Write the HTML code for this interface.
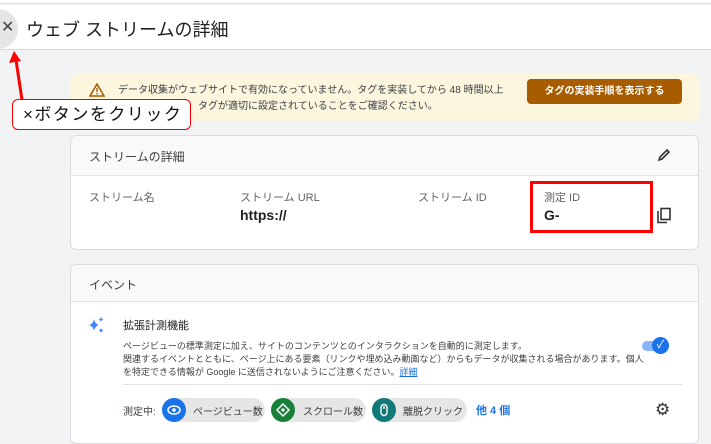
<!DOCTYPE html>
<html><head><meta charset="utf-8"><style>
*{margin:0;padding:0;box-sizing:border-box}
body{width:711px;height:435px;overflow:hidden;background:#f1f3f4;font-family:"Liberation Sans","Noto Sans CJK JP",sans-serif;color:#202124;position:relative}
.a{position:absolute;white-space:nowrap}
</style></head><body>
<div class="a" style="left:0;top:0;width:711px;height:4px;background:#fff;border-bottom:1px solid #e0e0e0"></div>
<div class="a" style="left:0;top:5px;width:711px;height:45px;background:#fff;border-bottom:1px solid #dadce0"></div>
<div class="a" style="left:-22px;top:9px;width:40px;height:40px;border-radius:50%;background:#e4e5e7"></div>
<div class="a" style="left:1px;top:17px;font-size:16px;color:#444">✕</div>
<div class="a" style="left:26px;top:16px;font-size:18px;color:#202124">ウェブ ストリームの詳細</div>

<div class="a" style="left:70px;top:74px;width:629px;height:48px;background:#fdf6df;border-radius:6px"></div>
<svg class="a" style="left:89px;top:83px" width="16" height="14" viewBox="0 0 16 14"><path d="M8 1L15 13H1Z" fill="none" stroke="#a85c00" stroke-width="1.6"/><rect x="7.3" y="5" width="1.4" height="4" fill="#a85c00"/><rect x="7.3" y="10" width="1.4" height="1.4" fill="#a85c00"/></svg>
<div class="a" style="left:118px;top:83px;font-size:10px;line-height:16px;color:#3c4043">データ収集がウェブサイトで有効になっていません。タグを実装してから 48 時間以上<br>経過した場合は、タグが適切に設定されていることをご確認ください。</div>
<div class="a" style="left:527px;top:79px;width:155px;height:25px;background:#a85c00;border-radius:4px;color:#fff;font-size:10px;font-weight:bold;text-align:center;line-height:25px">タグの実装手順を表示する</div>

<div class="a" style="left:70px;top:135px;width:629px;height:115px;background:#fff;border:1px solid #dadce0;border-radius:6px;overflow:hidden">
<div style="height:40px;background:#f8f9fa;border-bottom:1px solid #e3e3e3;font-size:12px;padding:12px 0 0 18px;color:#3c4043">ストリームの詳細</div>
</div>
<svg class="a" style="left:657px;top:148px" width="14" height="14" viewBox="0 0 14 14"><path d="M2 12L3 9L10 2L12 4L5 11Z" fill="none" stroke="#333" stroke-width="1.6"/></svg>
<div class="a" style="left:89px;top:189px;font-size:11px;color:#5f6368">ストリーム名</div>
<div class="a" style="left:240px;top:189px;font-size:11px;color:#5f6368">ストリーム URL</div>
<div class="a" style="left:240px;top:207px;font-size:14px;font-weight:bold;color:#202124">https://</div>
<div class="a" style="left:418px;top:189px;font-size:11px;color:#5f6368">ストリーム ID</div>
<div class="a" style="left:544px;top:189px;font-size:11px;color:#5f6368">測定 ID</div>
<div class="a" style="left:544px;top:207px;font-size:14px;font-weight:bold;color:#202124">G-</div>
<div class="a" style="left:530px;top:181px;width:123px;height:52px;border:3px solid #f00"></div>
<svg class="a" style="left:656px;top:207px" width="16" height="17" viewBox="0 0 16 17"><rect x="5" y="1.5" width="9" height="11" fill="none" stroke="#333" stroke-width="1.6"/><path d="M2 4V15.5H11" fill="none" stroke="#333" stroke-width="1.6"/></svg>

<div class="a" style="left:70px;top:264px;width:629px;height:180px;background:#fff;border:1px solid #dadce0;border-radius:6px;overflow:hidden">
<div style="height:37px;background:#f8f9fa;border-bottom:1px solid #e3e3e3;font-size:12px;padding:11px 0 0 18px;color:#3c4043">イベント</div>
</div>
<svg class="a" style="left:88px;top:316px" width="18" height="18" viewBox="0 0 18 18" fill="#4285f4"><path d="M6 3Q7 8 11 9Q7 10 6 15Q5 10 1 9Q5 8 6 3Z"/><path d="M13 1Q13.5 3 15.5 3.5Q13.5 4 13 6Q12.5 4 10.5 3.5Q12.5 3 13 1Z"/><path d="M13 12Q13.5 14 15.5 14.5Q13.5 15 13 17Q12.5 15 10.5 14.5Q12.5 14 13 12Z"/></svg>
<div class="a" style="left:123px;top:317px;font-size:11px;color:#202124">拡張計測機能</div>
<div class="a" style="left:123px;top:340px;font-size:9px;line-height:13px;color:#3c4043">ページビューの標準測定に加え、サイトのコンテンツとのインタラクションを自動的に測定します。<br>関連するイベントとともに、ページ上にある要素（リンクや埋め込み動画など）からもデータが収集される場合があります。個人<br>を特定できる情報が Google に送信されないようにご注意ください。<span style="color:#1a73e8;text-decoration:underline">詳細</span></div>
<div class="a" style="left:642px;top:341px;width:22px;height:10px;border-radius:5px;background:#8ab4f8"></div>
<div class="a" style="left:652px;top:337px;width:17px;height:17px;border-radius:50%;background:#1a73e8;color:#fff;font-size:11px;text-align:center;line-height:17px">✓</div>
<div class="a" style="left:123px;top:384px;width:559px;height:1px;background:#e0e0e0"></div>
<div class="a" style="left:123px;top:403px;font-size:10px;color:#3c4043">測定中:</div>
<div class="a" style="left:162px;top:398px;width:103px;height:24px;border-radius:12px;background:#e6e6e6"></div>
<div class="a" style="left:162px;top:398px;width:24px;height:24px;border-radius:50%;background:#1a73e8"></div>
<svg class="a" style="left:166px;top:402px" width="16" height="16" viewBox="0 0 16 16"><ellipse cx="8" cy="8" rx="6" ry="4" fill="none" stroke="#fff" stroke-width="1.5"/><circle cx="8" cy="8" r="1.8" fill="#fff"/></svg>
<div class="a" style="left:193px;top:403px;font-size:10px;color:#3c4043">ページビュー数</div>
<div class="a" style="left:271px;top:398px;width:95px;height:24px;border-radius:12px;background:#e6e6e6"></div>
<div class="a" style="left:271px;top:398px;width:24px;height:24px;border-radius:50%;background:#188038"></div>
<svg class="a" style="left:275px;top:402px" width="16" height="16" viewBox="0 0 16 16"><path d="M8 2L14 8L8 14L2 8Z" fill="none" stroke="#fff" stroke-width="1.5"/><circle cx="8" cy="8" r="1.6" fill="#fff"/></svg>
<div class="a" style="left:303px;top:403px;font-size:10px;color:#3c4043">スクロール数</div>
<div class="a" style="left:372px;top:398px;width:95px;height:24px;border-radius:12px;background:#e6e6e6"></div>
<div class="a" style="left:372px;top:398px;width:24px;height:24px;border-radius:50%;background:#12797a"></div>
<svg class="a" style="left:376px;top:402px" width="16" height="16" viewBox="0 0 16 16"><rect x="5" y="2.5" width="6" height="11" rx="3" fill="none" stroke="#fff" stroke-width="1.4"/><path d="M8 4V7" stroke="#fff" stroke-width="1.4"/></svg>
<div class="a" style="left:403px;top:403px;font-size:10px;color:#3c4043">離脱クリック</div>
<div class="a" style="left:476px;top:402px;font-size:11px;color:#1a73e8;font-weight:bold">他 4 個</div>
<div class="a" style="left:655px;top:400px;font-size:17px;color:#333">⚙</div>

<svg class="a" style="left:0;top:48px" width="40" height="54"><path d="M22 52L16 12" stroke="#f00" stroke-width="3" fill="none"/><path d="M9 15L14 3L21 13Z" fill="#f00"/></svg>
<div class="a" style="left:12px;top:99px;width:179px;height:31px;background:#fff;border:1.5px solid #e00;border-radius:6px;font-size:17px;line-height:29px;padding-left:10px;color:#111;letter-spacing:1.5px">×ボタンをクリック</div>
</body></html>
